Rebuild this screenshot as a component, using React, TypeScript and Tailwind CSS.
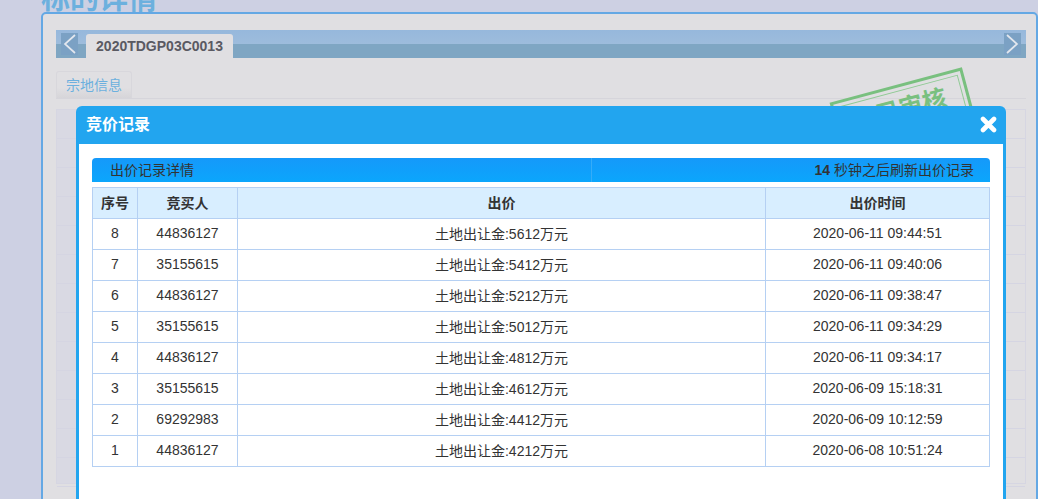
const rows = [
  ["8", "44836127", "5612", "2020-06-11 09:44:51"],
  ["7", "35155615", "5412", "2020-06-11 09:40:06"],
  ["6", "44836127", "5212", "2020-06-11 09:38:47"],
  ["5", "35155615", "5012", "2020-06-11 09:34:29"],
  ["4", "44836127", "4812", "2020-06-11 09:34:17"],
  ["3", "35155615", "4612", "2020-06-09 15:18:31"],
  ["2", "69292983", "4412", "2020-06-09 10:12:59"],
  ["1", "44836127", "4212", "2020-06-08 10:51:24"],
];
const font = { fontFamily: '"Liberation Sans", Arial, "Noto Sans CJK SC", sans-serif' };

function Arrow({ right }: { right?: boolean }) {
  return (
    <div className="flex h-[22px] w-[17px] items-center justify-center bg-[#7ba1c4]">
      <svg width="13" height="20" viewBox="0 0 13 20" fill="none" stroke="#e3e7ee" strokeWidth="1.7">
        <path d={right ? "M1 1l10 9-10 9" : "M12 1L2 10l10 9"} />
      </svg>
    </div>
  );
}

export default function App() {
  return (
    <div style={font} className="relative h-[499px] w-[1038px] overflow-hidden bg-[#cdd0e3] text-[14px] text-[#333]">
      <div className="h-3 overflow-hidden pl-[41px]">
        <div className="-mt-[16px] text-[29px] leading-[30px] font-bold text-[#6cb0de]">标的详情</div>
      </div>
      <div className="ml-[41px] h-[600px] rounded-t-[5px] border-2 border-[#64a8e4] bg-[#e0dfe2] pt-4 pr-[10px] pl-[13px]">
        <div className="flex h-7 items-end justify-between bg-[linear-gradient(#96b8dc_0,#9dbcdc_50%,#7fa6c3_50%,#7fa6c3_100%)] px-[5px]">
          <div className="flex h-full items-start gap-2 pt-[3px]">
            <Arrow />
            <div className="mt-px flex h-6 w-[147px] items-center justify-center rounded-t-[3px] bg-[#e0dfe2] text-[14px] font-bold text-[#5a5a62]">
              2020TDGP03C0013
            </div>
          </div>
          <div className="h-full pt-[3px]"><Arrow right /></div>
        </div>
        <div className="mt-[13px] h-7 border-b border-[#d6d5db]">
          <div className="flex h-[27px] w-[76px] items-center justify-center rounded-t-[3px] border border-b-0 border-[#d8d7dc] bg-[linear-gradient(#e0dfe2_60%,#d6d5d9)] text-[14px] text-[#6cb0de]">
            宗地信息
          </div>
        </div>
        <div className="relative mt-[10px]">
          <div className="relative h-[375px] border border-[#d6d6e2] bg-[linear-gradient(90deg,#d9d9e3_120px,transparent_120px)]">
            {Array.from({ length: 13 }).map((_, i) => (
              <div key={i} className="h-[29px] border-b border-[#d5d5e2]" />
            ))}
          </div>
          <div className="absolute -top-[25px] right-[54px] h-[60px] w-[137px] -rotate-[15deg] border-[3px] border-[#79c07f] p-[3px]">
            <div className="h-full border border-[#8fca94] pt-[6px] pl-[35px] text-[24px] leading-6 font-bold whitespace-nowrap text-[#79c07f]">已审核</div>
          </div>
        </div>
      </div>

      <div className="absolute top-[106px] left-[76px] h-[420px] w-[930px] rounded-t-[6px] bg-[#22a5ef] px-[3px]">
        <div className="flex h-[38px] items-center justify-between pr-[6px] pb-[2px] pl-[7px]">
          <span className="pt-[2px] text-[16px] font-bold text-white">竞价记录</span>
          <svg width="17" height="17" viewBox="0 0 17 17"><path d="M3 3l11 11M14 3L3 14" stroke="#fff" strokeWidth="4.6" strokeLinecap="round" /></svg>
        </div>
        <div className="h-full bg-white px-[13px] pt-[14px]">
          <div className="flex h-6 rounded-t-[4px] bg-[linear-gradient(#1599fa,#0ba6fc)] text-[14px] leading-6 text-[#333]">
            <div className="w-[500px] border-r border-[#35acf8] pl-[18px]">出价记录详情</div>
            <div className="flex-1 pr-4 text-right"><b>14</b> 秒钟之后刷新出价记录</div>
          </div>
          <table className="mt-[5px] w-[898px] table-fixed border-collapse text-center text-[14px]">
            <colgroup>
              <col className="w-[45px]" />
              <col className="w-[100px]" />
              <col className="w-[528px]" />
              <col />
            </colgroup>
            <thead>
              <tr className="h-[31px] bg-[#d8eeff] font-bold">
                {["序号", "竞买人", "出价", "出价时间"].map((h) => (
                  <th key={h} className="border border-[#b5d0f3] p-0">{h}</th>
                ))}
              </tr>
            </thead>
            <tbody>
              {rows.map((r) => (
                <tr key={r[0]} className="h-[31px]">
                  <td className="border border-[#b5d0f3] p-0 pb-[2px]">{r[0]}</td>
                  <td className="border border-[#b5d0f3] p-0 pb-[2px]">{r[1]}</td>
                  <td className="border border-[#b5d0f3] p-0">土地出让金:{r[2]}万元</td>
                  <td className="border border-[#b5d0f3] p-0 pb-[2px]">{r[3]}</td>
                </tr>
              ))}
            </tbody>
          </table>
        </div>
      </div>
    </div>
  );
}
